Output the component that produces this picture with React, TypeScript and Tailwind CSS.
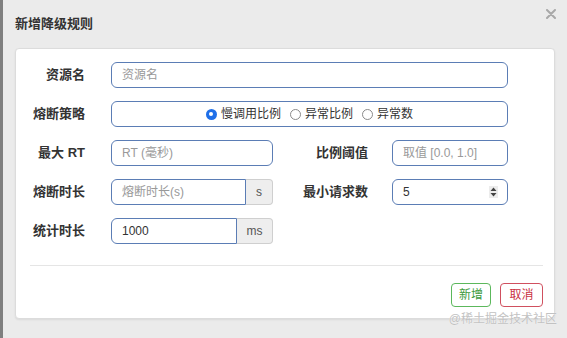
import React from 'react';

const font = '"Liberation Sans", "Noto Sans CJK SC", sans-serif';

const Label: React.FC<{ text: string; className?: string }> = ({ text, className }) => (
  <div className={`shrink-0 text-right text-[13px] font-bold text-[#333] ${className ?? ''}`}>{text}</div>
);

const Radio: React.FC<{ checked?: boolean; label: string }> = ({ checked, label }) => (
  <label className="flex items-center gap-[4px]">
    {checked ? (
      <span className="w-[11px] h-[11px] rounded-full bg-[#1f6fe8] flex items-center justify-center">
        <span className="w-[4px] h-[4px] rounded-full bg-white" />
      </span>
    ) : (
      <span className="w-[11px] h-[11px] rounded-full border border-[#8a8a8a] bg-white" />
    )}
    <span className="text-[12px] text-[#333]">{label}</span>
  </label>
);

const App: React.FC = () => {
  return (
    <div className="relative w-[567px] h-[338px] bg-[#ebebeb] flex overflow-hidden" style={{ fontFamily: font }}>
      <div className="w-[3px] shrink-0 bg-[#7f7f7f]" />
      <div className="flex-1 flex flex-col">
        {/* header */}
        <div className="h-[48px] flex items-center pl-[12px]">
          <h3 className="text-[13px] font-bold text-[#333]">新增降级规则</h3>
          <svg className="ml-auto self-start mt-[9px] mr-[11px]" width="10" height="10" viewBox="0 0 10 10">
            <path d="M1 1 L9 9 M9 1 L1 9" stroke="#a8a8a8" strokeWidth="2" strokeLinecap="round" />
          </svg>
        </div>

        {/* body */}
        <div className="ml-[12px] w-[540px] h-[271px] bg-white border border-[#dcdcdc] rounded-[4px] shadow-[0_1px_2px_rgba(0,0,0,0.08)] pt-[13px] flex flex-col">
          <div className="flex flex-col gap-[13px]">
            <div className="flex items-center h-[26px]">
              <Label text="资源名" className="w-[69px]" />
              <div className="ml-[26px] w-[397px] h-[26px] border border-[#5b7db5] rounded-[6px] flex items-center pl-[10px] text-[12px] text-[#999]">
                资源名
              </div>
            </div>

            <div className="flex items-center h-[26px]">
              <Label text="熔断策略" className="w-[69px]" />
              <div className="ml-[26px] w-[397px] h-[26px] border border-[#5b7db5] rounded-[6px] flex items-center justify-center gap-[9px]">
                <Radio checked label="慢调用比例" />
                <Radio label="异常比例" />
                <Radio label="异常数" />
              </div>
            </div>

            <div className="flex items-center h-[26px]">
              <Label text="最大 RT" className="w-[69px]" />
              <div className="ml-[26px] w-[162px] h-[26px] border border-[#5b7db5] rounded-[6px] flex items-center pl-[10px] text-[12px] text-[#999]">
                RT (毫秒)
              </div>
              <Label text="比例阈值" className="w-[95px]" />
              <div className="ml-[24px] w-[116px] h-[26px] border border-[#5b7db5] rounded-[6px] flex items-center pl-[10px] text-[12px] text-[#999]">
                取值 [0.0, 1.0]
              </div>
            </div>

            <div className="flex items-center h-[26px]">
              <Label text="熔断时长" className="w-[69px]" />
              <div className="ml-[26px] w-[162px] h-[26px] flex">
                <div className="flex-1 border border-[#5b7db5] rounded-l-[6px] flex items-center pl-[10px] text-[12px] text-[#999]">
                  熔断时长(s)
                </div>
                <div className="w-[27px] bg-[#eeeeee] border border-l-0 border-[#cfcfcf] rounded-r-[4px] flex items-center justify-center text-[12px] text-[#555]">
                  s
                </div>
              </div>
              <Label text="最小请求数" className="w-[95px]" />
              <div className="ml-[24px] w-[116px] h-[26px] border border-[#5b7db5] rounded-[6px] flex items-center pl-[10px] pr-[9px] text-[12px] text-[#333]">
                <span>5</span>
                <span className="ml-auto w-[9px] h-[12px] bg-[#ececec] flex items-center justify-center">
                  <svg width="7" height="10" viewBox="0 0 7 10">
                    <path d="M3.5 0.5 L6.5 4 L0.5 4 Z M0.5 6 L6.5 6 L3.5 9.5 Z" fill="#444" />
                  </svg>
                </span>
              </div>
            </div>

            <div className="flex items-center h-[26px]">
              <Label text="统计时长" className="w-[69px]" />
              <div className="ml-[26px] w-[162px] h-[26px] flex">
                <div className="flex-1 border border-[#5b7db5] rounded-l-[6px] flex items-center pl-[10px] text-[12px] text-[#333]">
                  1000
                </div>
                <div className="w-[36px] bg-[#eeeeee] border border-l-0 border-[#cfcfcf] rounded-r-[4px] flex items-center justify-center text-[12px] text-[#555]">
                  ms
                </div>
              </div>
            </div>
          </div>

          <div className="mt-[21px] ml-[14px] mr-[11px] h-px bg-[#e5e5e5]" />

          <div className="mt-[17px] flex justify-end gap-[9px] pr-[11px]">
            <button className="w-[40px] h-[24px] bg-white border border-[#5cb85c] rounded-[4px] text-[12px] text-[#3d9a3d]">
              新增
            </button>
            <button className="w-[43px] h-[24px] bg-white border border-[#d0505f] rounded-[4px] text-[12px] text-[#c9303f]">
              取消
            </button>
          </div>
        </div>
      </div>

      <div className="absolute right-[10px] bottom-[10px] text-[12px] text-[#c2c2c2] [text-shadow:0_0_1px_#fff]">
        @稀土掘金技术社区
      </div>
    </div>
  );
};

export default App;
